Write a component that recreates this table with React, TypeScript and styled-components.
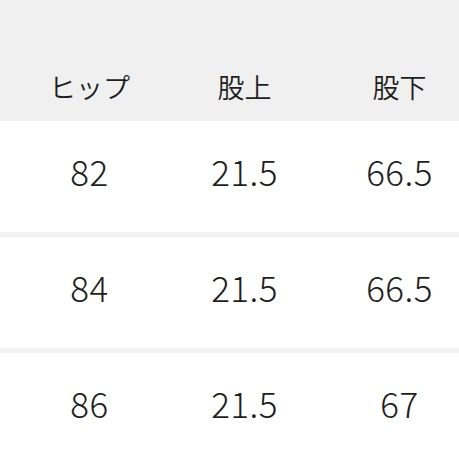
import React from 'react';
import styled, { createGlobalStyle } from 'styled-components';

const Global = createGlobalStyle`
  html, body { margin: 0; padding: 0; background: #fff; }
  body { font-family: "Noto Sans CJK JP", "Noto Sans", sans-serif; color: #1e1e1e; }
`;

const Table = styled.div`
  width: 459px;
  overflow: hidden;
  background: #f1f1f1;
`;

const Head = styled.div`
  display: grid;
  grid-template-columns: repeat(3, 155px);
  padding: 0 0 17px 12px;
  height: 121px;
  box-sizing: border-box;
  align-items: end;
  background: #f0f0f0;
`;

const Row = styled.div`
  display: grid;
  grid-template-columns: repeat(3, 155px);
  padding: 0 0 12px 12px;
  margin-top: 5px;
  height: 111px;
  box-sizing: border-box;
  align-items: center;
  background: #fff;

  &:nth-child(2) { margin-top: 0; }
`;

const HeadCell = styled.div`
  text-align: center;
  font-size: 27px;
  line-height: 34px;
  font-weight: 350;
`;

const Cell = styled.div`
  text-align: center;
  font-size: 35px;
  line-height: 44px;
  font-weight: 300;
  letter-spacing: 0.4px;
`;

const heads = ['ヒップ', '股上', '股下'];
const rows = [
  ['82', '21.5', '66.5'],
  ['84', '21.5', '66.5'],
  ['86', '21.5', '67'],
];

export default function App() {
  return (
    <>
      <Global />
      <Table>
        <Head>
          {heads.map(h => <HeadCell key={h}>{h}</HeadCell>)}
        </Head>
        {rows.map((r, i) => (
          <Row key={i}>
            {r.map((v, j) => <Cell key={j}>{v}</Cell>)}
          </Row>
        ))}
      </Table>
    </>
  );
}
